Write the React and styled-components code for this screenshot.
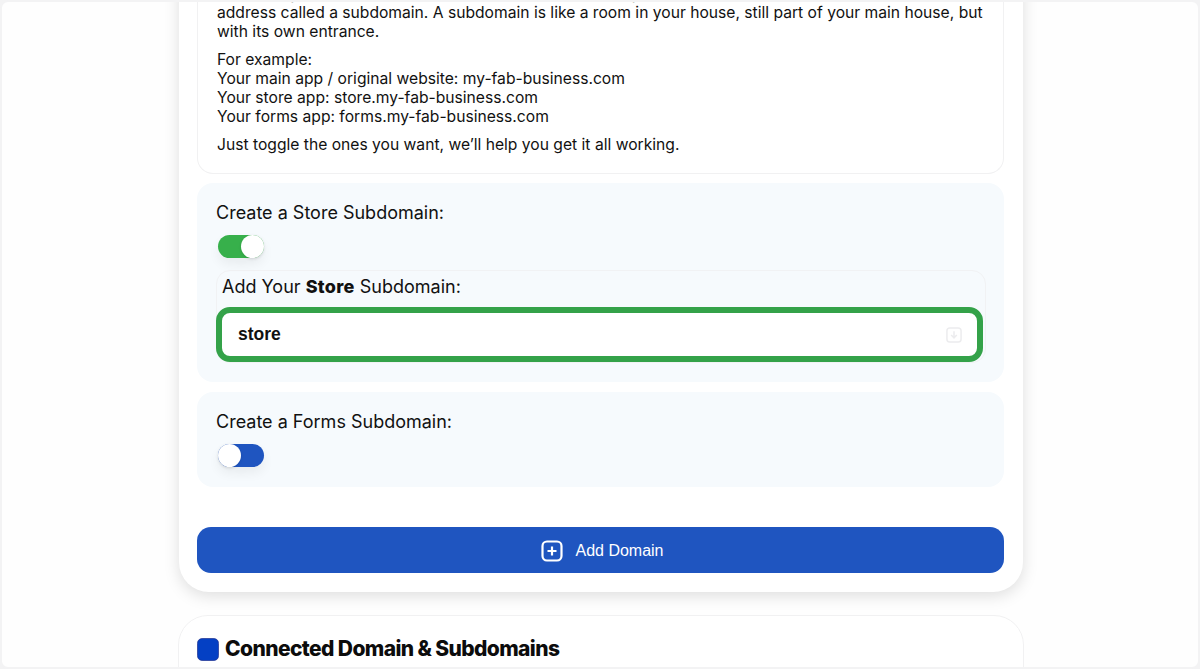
import React from "react";
import styled, { createGlobalStyle } from "styled-components";

const GlobalStyle = createGlobalStyle`
  html, body { margin: 0; padding: 0; background: #f3f3f4; }
  body { font-family: "Inter", "Noto Sans", sans-serif; color: #111; }
`;

const Frame = styled.div`
  width: 1200px;
  height: 669px;
  overflow: hidden;
  box-sizing: border-box;
  background: #fefefe;
  border: 2px solid #f3f3f4;
  border-radius: 8px;
  padding-left: 2px;
`;

const Column = styled.div`
  width: 844px;
  margin: -42px auto 0;
  display: flex;
  flex-direction: column;
  gap: 23px;
`;

const Card = styled.section`
  box-sizing: border-box;
  background: #fff;
  border-radius: 30px;
  padding: 0 19px 19px 18px;
  box-shadow: 0 4px 16px rgba(0, 0, 0, 0.13);
  display: flex;
  flex-direction: column;
`;

const InfoBox = styled.div`
  border: 1px solid #f1f1f2;
  border-top: 0;
  border-radius: 0 0 16px 16px;
  padding: 24px 10px 10px 19px;
  font-size: 15.65px;
  line-height: 19px;
  margin-bottom: 9px;
  white-space: nowrap;
  p { margin: 0 0 9px; }
`;

const Panel = styled.div`
  background: #f6fafd;
  border-radius: 16px;
  padding: 20px 18px 20px 19px;
  margin-bottom: 10px;
`;

const PanelTitle = styled.div`
  font-size: 18px;
  line-height: 20px;
  margin-bottom: 12px;
`;

const Toggle = styled.div`
  position: relative;
  width: 46px;
  height: 23px;
  margin-left: 2px;
  border-radius: 12px;
  background: ${(p) => (p.$on ? "#37b04b" : "#1f55c0")};
  box-shadow: 0 6px 12px rgba(0, 0, 0, 0.06);
`;

const Knob = styled.span`
  position: absolute;
  top: 0;
  ${(p) => (p.$on ? "right: 0;" : "left: 0;")}
  width: 23px;
  height: 23px;
  border-radius: 50%;
  background: #fff;
  box-shadow: 0 1px 3px rgba(0, 0, 0, 0.12);
`;

const SubBox = styled.div`
  margin: 12px 0 -1px;
  border: 1px solid #f1f2f4;
  border-radius: 14px;
  padding: 5px 2px 0 5px;
`;

const SubLabel = styled.div`
  font-size: 18px;
  line-height: 21px;
  margin-bottom: 10px;
  b { font-weight: 800; letter-spacing: 0.3px; }
`;

const InputShell = styled.div`
  margin: 0 0 0 -6px;
  box-sizing: border-box;
  height: 55px;
  display: flex;
  align-items: center;
  justify-content: space-between;
  border: 6px solid #34a249;
  border-radius: 14px;
  background: #fff;
  padding: 0 15px 0 16px;
  font-family: "Liberation Sans", sans-serif;
  font-weight: 700;
  font-size: 17.5px;
`;

const AddButton = styled.button`
  margin-top: 30px;
  height: 46px;
  border: 0;
  border-radius: 14px;
  background: #1f55c0;
  color: #fff;
  font-family: "Liberation Sans", sans-serif;
  font-size: 16px;
  display: flex;
  align-items: center;
  justify-content: center;
  gap: 12px;
  padding: 1px 0 0 4px;
`;

const ListCard = styled(Card)`
  margin: 0 -1px;
  padding-top: 21px;
  height: 120px;
  border: 1px solid #f1f1f2;
  box-shadow: none;
`;

const ListHeading = styled.h2`
  margin: 0;
  display: flex;
  align-items: center;
  gap: 6px;
  font-size: 21px;
  line-height: 24px;
  font-weight: 800;
  letter-spacing: -0.6px;
  color: #0c0c0c;
`;

const ListSub = styled.div`
  font-size: 13px;
  line-height: 18px;
  margin-left: 28px;
  margin-top: 3px;
  color: #777;
`;

function DownIcon() {
  return (
    <svg width="16" height="16" viewBox="0 0 17 17" fill="none" stroke="#ececee" strokeWidth="1.6">
      <rect x="1" y="1" width="15" height="15" rx="3" />
      <path d="M8.500 4.500v7M5.500 8.500l3 3 3-3" />
    </svg>
  );
}

function PlusIcon() {
  return (
    <svg width="22" height="22" viewBox="0 0 22 22" fill="none" stroke="#fff" strokeWidth="2.2">
      <rect x="1.500" y="1.500" width="19" height="19" rx="4.500" />
      <path d="M11 6.500v9M6.500 11h9" />
    </svg>
  );
}

function DbIcon() {
  return (
    <svg width="22" height="23" viewBox="0 0 22 23">
      <path d="M6 .5h10c3.500 0 5.500 1.500 5.500 5v12c0 3.500-2 5-5.500 5H6c-3.500 0-5.500-1.500-5.500-5v-12c0-3.500 2-5 5.500-5z" fill="#0440c4" stroke="#1c2f8f" strokeWidth=".7" />
    </svg>
  );
}

export default function App() {
  return (
    <Frame>
      <GlobalStyle />
      <Column>
        <Card>
          <InfoBox>
            <p>
              Each app you create can live at its own web address on your domain, each with a special
              <br />
              address called a subdomain. A subdomain is like a room in your house, still part of your main house, but
              <br />
              with its own entrance.
            </p>
            <p>
              For example:
              <br />
              Your main app / original website: my-fab-business.com
              <br />
              Your store app: store.my-fab-business.com
              <br />
              Your forms app: forms.my-fab-business.com
            </p>
            <p>Just toggle the ones you want, we’ll help you get it all working.</p>
          </InfoBox>
          <Panel>
            <PanelTitle>Create a Store Subdomain:</PanelTitle>
            <Toggle $on>
              <Knob $on />
            </Toggle>
            <SubBox>
              <SubLabel>
                Add Your <b>Store</b> Subdomain:
              </SubLabel>
              <InputShell>
                store
                <DownIcon />
              </InputShell>
            </SubBox>
          </Panel>
          <Panel>
            <PanelTitle>Create a Forms Subdomain:</PanelTitle>
            <Toggle>
              <Knob />
            </Toggle>
          </Panel>
          <AddButton>
            <PlusIcon />
            Add Domain
          </AddButton>
        </Card>
        <ListCard>
          <ListHeading>
            <DbIcon />
            Connected Domain &amp; Subdomains
          </ListHeading>
          <ListSub>Add domains and manage your connected subdomains here</ListSub>
        </ListCard>
      </Column>
    </Frame>
  );
}
